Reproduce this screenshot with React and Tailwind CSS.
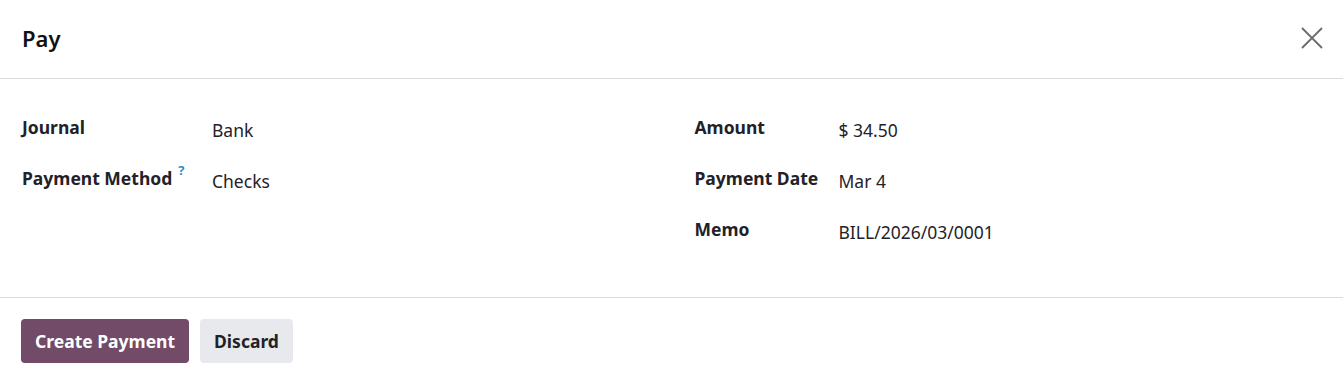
function Field({ label, value, help, labelWidth }) {
  return (
    <div className="flex items-start h-[51px]">
      <div className={`${labelWidth} shrink-0 font-bold text-[#1f2228] leading-6 pt-[3px]`}>
        {label}
        {help ? <span className="ml-[6px] inline-block align-top -mt-[4px] leading-4 text-[#2e8bc9] font-bold text-[13px]">?</span> : null}
      </div>
      <div className="text-[#1f2228] leading-6 pt-[6px]">{value}</div>
    </div>
  );
}

export default function App() {
  return (
    <div className="w-[1343px] h-[383px] bg-white text-[17.5px]" style={{ fontFamily: '"Noto Sans", "Open Sans", sans-serif' }}>
      <header className="h-[79px] flex items-center justify-between px-[22px] border-b border-[#dcdcdc]">
        <h1 className="text-[22px] font-semibold text-[#111] -mt-[2px]">Pay</h1>
        <svg width="22" height="22" viewBox="0 0 22 22" className="text-[#6f6a72] -mr-[2px] -mt-[2px]">
          <path d="M1 1 L21 21 M21 1 L1 21" stroke="currentColor" strokeWidth="1.8" fill="none" />
        </svg>
      </header>
      <main className="h-[219px] border-b border-[#dcdcdc] grid grid-cols-2 pl-[22px] pt-[33px]">
        <div>
          <Field label="Journal" value="Bank" labelWidth="w-[190px]" />
          <Field label="Payment Method" value="Checks" help labelWidth="w-[190px]" />
        </div>
        <div className="pl-[12px]">
          <Field label="Amount" value="$ 34.50" labelWidth="w-[144px]" />
          <Field label="Payment Date" value="Mar 4" labelWidth="w-[144px]" />
          <Field label="Memo" value="BILL/2026/03/0001" labelWidth="w-[144px]" />
        </div>
      </main>
      <footer className="flex gap-[11px] px-[21px] pt-[21px]">
        <button className="h-[44px] px-[14px] rounded-[4px] bg-[#714b67] text-white font-bold">Create Payment</button>
        <button className="h-[44px] px-[14px] rounded-[4px] bg-[#e7e9ed] text-[#1f2228] font-bold">Discard</button>
      </footer>
    </div>
  );
}
